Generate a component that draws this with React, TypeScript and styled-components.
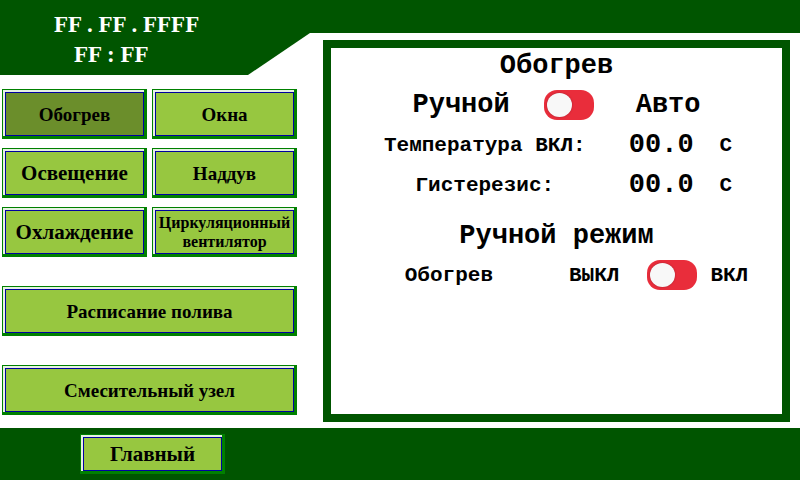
import React, { useState } from "react";
import styled, { createGlobalStyle } from "styled-components";

const GlobalStyle = createGlobalStyle`
  *, *::before { box-sizing: border-box; }
  body { margin: 0; background: #fff; color: #000; }
`;

const Page = styled.div`
  min-height: 100vh;
  display: flex;
  flex-direction: column;
  font-family: "Liberation Serif", "Times New Roman", serif;
  font-weight: bold;
`;

const Body = styled.div`
  flex: 1;
  display: flex;
`;

const Side = styled.div`
  flex: none;
  width: 310px;
`;

const Clock = styled.header`
  height: 75px;
  padding: 10px 0 0 54px;
  background: #005500;
  clip-path: polygon(0 0, 100% 0, 100% 33px, 248px 100%, 0 100%);
  color: #fff;
  font-size: 23px;
  line-height: 30px;
`;

const Time = styled.div`
  padding-left: 20px;
`;

const Nav = styled.nav`
  display: grid;
  grid-template-columns: 1fr 1fr;
  gap: 9px 5px;
  padding: 14px 13px 0 2px;
`;

const Bevel = styled.button<{ $wide?: boolean }>`
  display: flex;
  width: 100%;
  height: 50px;
  padding: 2px 0 0 2px;
  border: solid #008000;
  border-width: 1px 3px 3px 1px;
  background: #e6f2e2;
  color: #000;
  font: inherit;
  cursor: pointer;
  ${(p) => p.$wide && "grid-column: 1 / -1; margin-top: 20px;"}
`;

const HomeBevel = styled(Bevel)`
  width: 145px;
  height: 40px;
`;

const Face = styled.span<{ $active?: boolean; $size: number }>`
  flex: 1;
  align-self: stretch;
  display: flex;
  align-items: center;
  justify-content: center;
  border: 1px solid #0000a0;
  background: ${(p) => (p.$active ? "#6b8e2b" : "#97c740")};
  font-size: ${(p) => p.$size}px;
  line-height: 19px;
  white-space: pre;
  text-align: center;
`;

const Main = styled.main`
  flex: 1;
  display: flex;
  flex-direction: column;
`;

const Strip = styled.div`
  height: 33px;
  background: #005500;
`;

const Panel = styled.section`
  flex: 1;
  margin: 7px 10px 6px 13px;
  border: 8px solid #005500;
  font-family: "Courier New", "Liberation Mono", monospace;
`;

const Title = styled.h2`
  margin: 0;
  padding-top: 3px;
  font-size: 27px;
  line-height: 30px;
  text-align: center;
`;

const SubTitle = styled(Title)`
  padding: 16px 0 4px;
`;

const Row = styled.div`
  display: flex;
  align-items: center;
  justify-content: center;
  height: 40px;
  font-size: 21px;
`;

const ModeRow = styled(Row)`
  gap: 34px;
  height: 44px;
  padding-top: 4px;
  font-size: 27px;
`;

const ManualRow = styled(Row)`
  padding-left: 40px;
`;

const Label = styled.label`
  width: 208px;
  text-align: center;
`;

const Value = styled.output`
  padding-left: 40px;
  font-size: 27px;
`;

const Unit = styled.span`
  padding-left: 26px;
`;

const ManualName = styled.span`
  margin-right: 76px;
`;

const Toggle = styled.input`
  appearance: none;
  flex: none;
  width: 50px;
  height: 30px;
  margin: 0;
  padding: 3px;
  border-radius: 13px;
  background: #e92d3b;
  cursor: pointer;
  &::before {
    content: "";
    display: block;
    width: 25px;
    height: 24px;
    border-radius: 50%;
    background: #f8f8f8;
    box-shadow: 0 0 2px #a02030;
  }
  &:checked::before { margin-left: 19px; }
`;

const ModeToggle = styled(Toggle)`
  margin-right: 8px;
`;

const ManualToggle = styled(Toggle)`
  margin: 0 13px 0 28px;
`;

const Footer = styled.footer`
  height: 52px;
  padding: 6px 0 0 80px;
  background: #005500;
`;

const sections = [
  { text: "Обогрев", size: 19 },
  { text: "Окна", size: 19 },
  { text: "Освещение", size: 21 },
  { text: "Наддув", size: 19 },
  { text: "Охлаждение", size: 21 },
  { text: "Циркуляционный\nвентилятор", size: 16 },
  { text: "Расписание полива", size: 19, wide: true },
  { text: "Смесительный узел", size: 19, wide: true },
];

const settings = [
  { id: "temp", label: "Температура ВКЛ:", value: "00.0" },
  { id: "hyst", label: "Гистерезис:", value: "00.0" },
];

export default function App() {
  const [active, setActive] = useState(0);
  return (
    <Page>
      <GlobalStyle />
      <Body>
        <Side>
          <Clock>
            <div>FF . FF . FFFF</div>
            <Time>FF : FF</Time>
          </Clock>
          <Nav>
            {sections.map((s, i) => (
              <Bevel key={s.text} type="button" $wide={s.wide} onClick={() => setActive(i)}>
                <Face $active={i === active} $size={s.size}>{s.text}</Face>
              </Bevel>
            ))}
          </Nav>
        </Side>
        <Main>
          <Strip />
          <Panel>
            <Title>Обогрев</Title>
            <ModeRow>
              <label htmlFor="mode">Ручной</label>
              <ModeToggle id="mode" type="checkbox" role="switch" />
              <label htmlFor="mode">Авто</label>
            </ModeRow>
            {settings.map((s) => (
              <Row key={s.id}>
                <Label htmlFor={s.id}>{s.label}</Label>
                <Value id={s.id}>{s.value}</Value>
                <Unit>С</Unit>
              </Row>
            ))}
            <SubTitle>Ручной режим</SubTitle>
            <ManualRow>
              <ManualName>Обогрев</ManualName>
              <label htmlFor="heat">ВЫКЛ</label>
              <ManualToggle id="heat" type="checkbox" role="switch" />
              <label htmlFor="heat">ВКЛ</label>
            </ManualRow>
          </Panel>
        </Main>
      </Body>
      <Footer>
        <HomeBevel type="button">
          <Face $size={21}>Главный</Face>
        </HomeBevel>
      </Footer>
    </Page>
  );
}
